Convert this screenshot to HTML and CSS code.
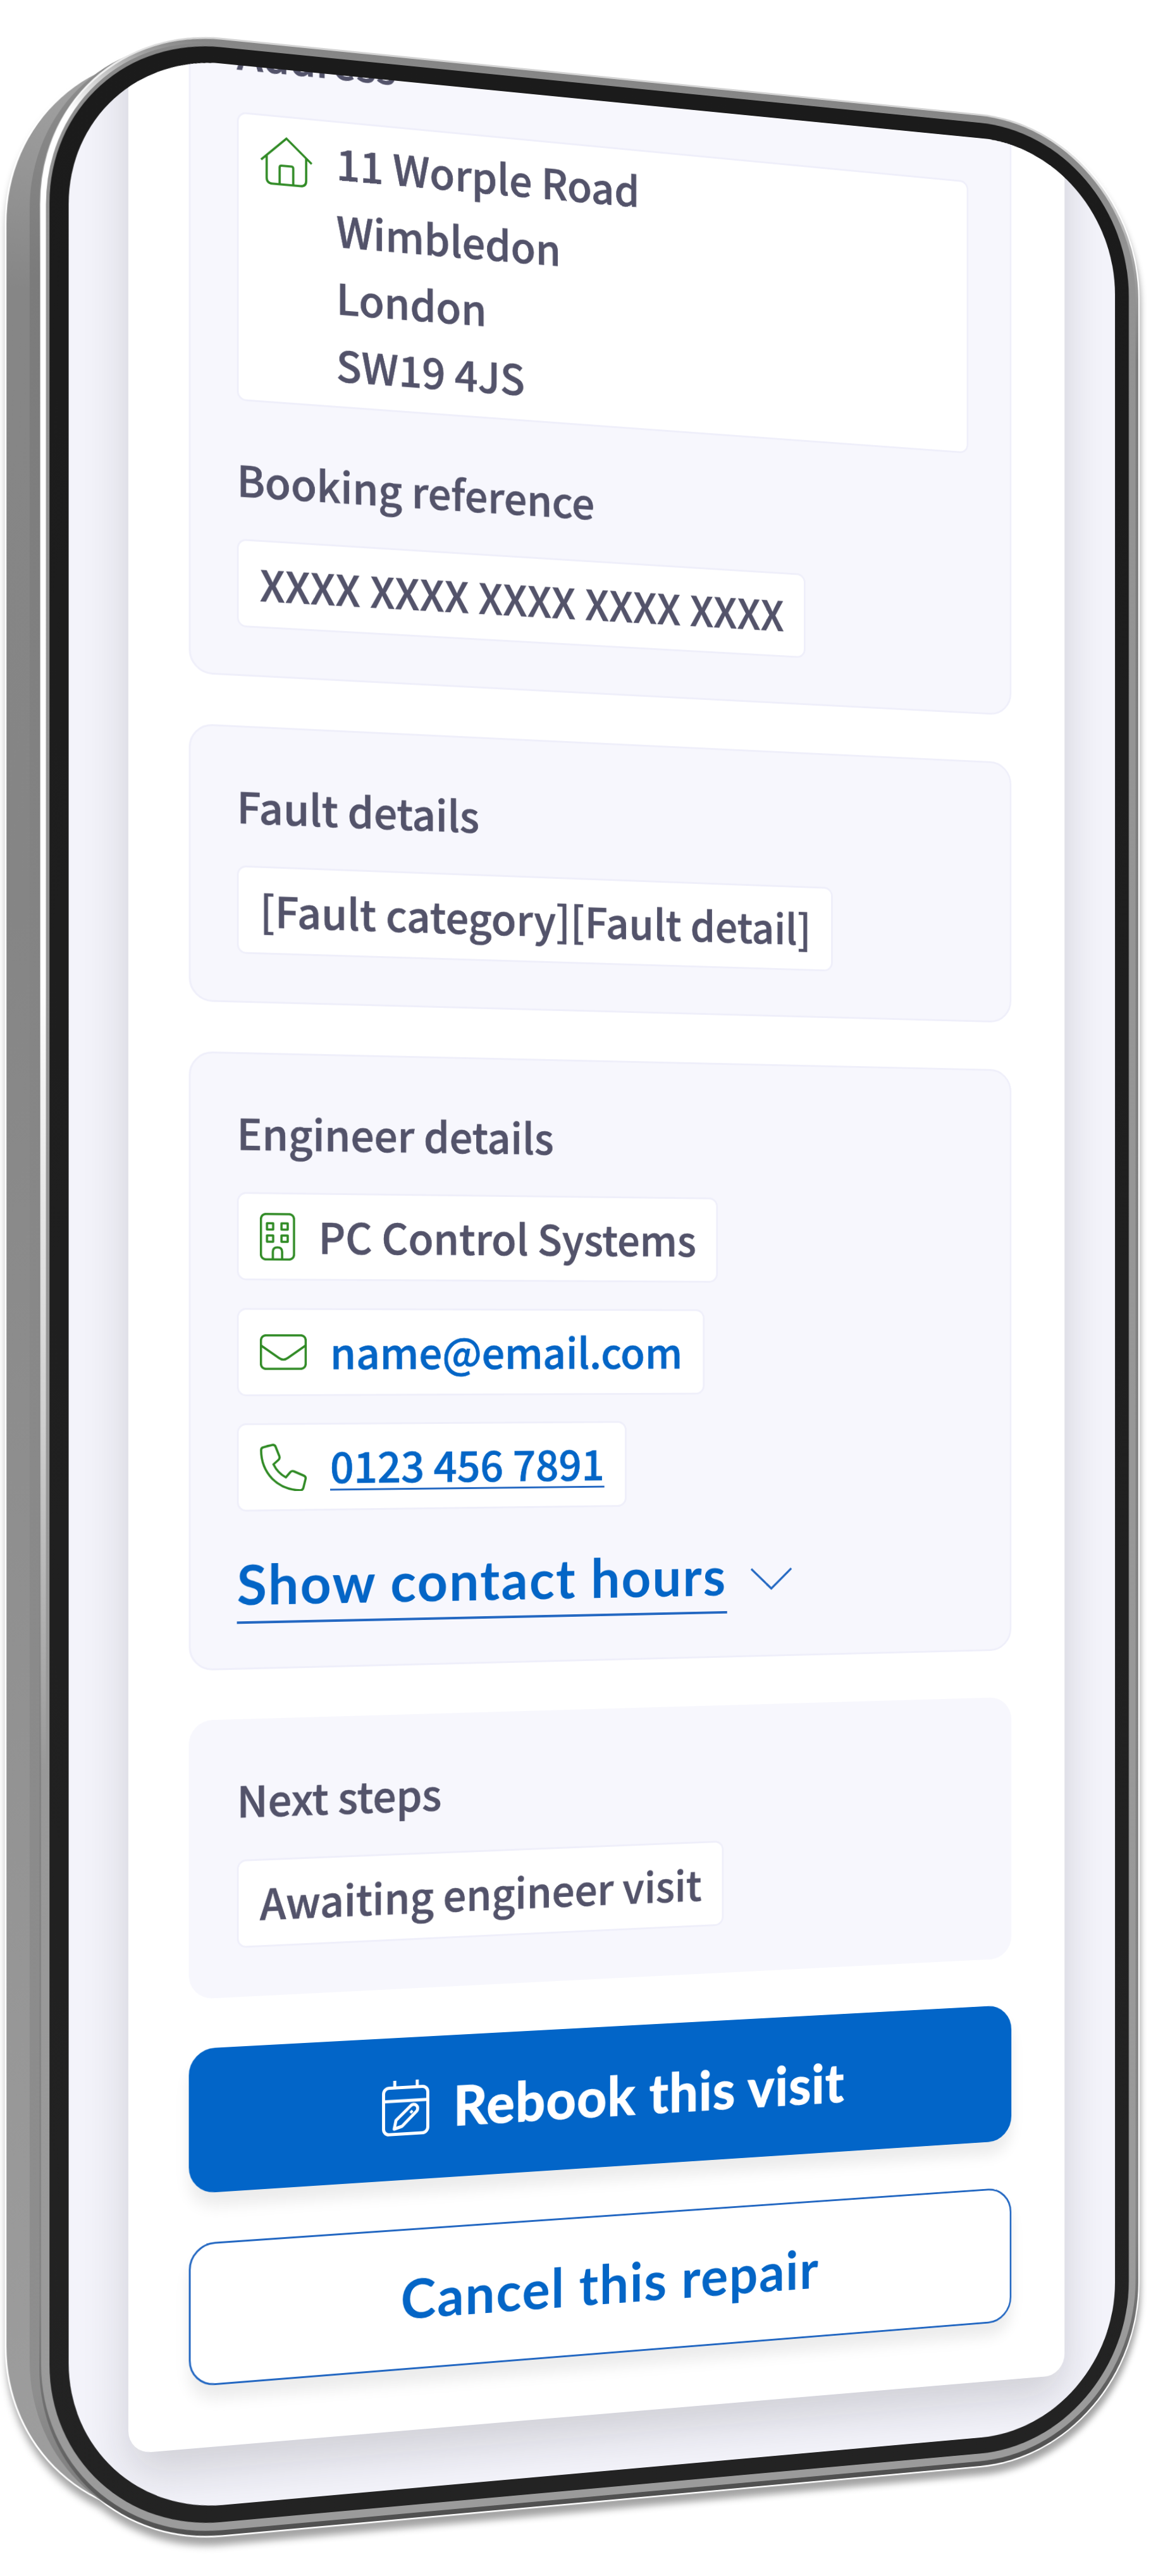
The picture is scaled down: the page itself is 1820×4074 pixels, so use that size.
FILE: index.html
```html
<!DOCTYPE html>
<html lang="en">
<head>
<meta charset="utf-8">
<title>Repair visit</title>
<link rel="stylesheet" href="styles.css">
</head>
<body>
<div class="stage">
<div class="phone">
  <svg class="frame" viewBox="0 0 2000 4074" aria-hidden="true">
    <defs>
      <linearGradient id="side" x1="0" y1="0" x2="0" y2="1">
        <stop offset="0" stop-color="#a6a6a6"/><stop offset=".04" stop-color="#999"/><stop offset=".1" stop-color="#868686"/>
        <stop offset=".35" stop-color="#858585"/><stop offset=".8" stop-color="#979797"/><stop offset="1" stop-color="#9e9e9e"/>
      </linearGradient>
      <linearGradient id="groove" x1="0" y1="0" x2="0" y2="1">
        <stop offset="0" stop-color="#8f8f8f"/><stop offset=".1" stop-color="#7b7b7b"/><stop offset=".5" stop-color="#888"/><stop offset=".94" stop-color="#8e8e8e"/><stop offset="1" stop-color="#777"/>
      </linearGradient>
      <linearGradient id="rim" x1="0" y1="0" x2="0" y2="1">
        <stop offset="0" stop-color="#d4d4d4"/><stop offset=".02" stop-color="#e4e4e4"/><stop offset=".06" stop-color="#a0a0a0"/><stop offset=".1" stop-color="#7c7c7c"/>
        <stop offset=".9" stop-color="#868686"/><stop offset="1" stop-color="#505050"/>
      </linearGradient>
      <linearGradient id="metal" x1="0" y1="0" x2="0" y2="1">
        <stop offset="0" stop-color="#868686"/><stop offset=".05" stop-color="#929292"/><stop offset="1" stop-color="#9b9b9b"/>
      </linearGradient>
      <linearGradient id="bezel" x1="0" y1="0" x2="0" y2="1">
        <stop offset="0" stop-color="#1b1b1b"/><stop offset="1" stop-color="#232323"/>
      </linearGradient>
      <linearGradient id="shine" gradientUnits="userSpaceOnUse" x1="0" y1="45" x2="0" y2="2800">
        <stop offset=".003" stop-color="#fff" stop-opacity="0"/><stop offset=".05" stop-color="#fff"/><stop offset=".55" stop-color="#fff"/><stop offset=".8" stop-color="#fff" stop-opacity=".55"/><stop offset="1" stop-color="#fff" stop-opacity="0"/>
      </linearGradient>
    </defs>
    <g class="body-shadow">
      <rect x="12" y="80" width="1700" height="3906" rx="290" fill="url(#side)" stroke="#fff" stroke-width="5"/>
      <rect x="63" y="45" width="1870" height="3978" rx="290" fill="#888" stroke="#fff" stroke-width="5"/>
    </g>
    <rect x="12" y="80" width="1700" height="3906" rx="290" fill="url(#side)"/>
    <rect x="48" y="54" width="1800" height="3958" rx="290" fill="url(#groove)"/>
    <rect x="63" y="45" width="1870" height="3978" rx="290" fill="url(#rim)"/>
    <rect x="66" y="48" width="1862" height="3967" rx="286" fill="url(#metal)"/>
    <path d="M345 51A276 284 0 0 0 69 335V2800" fill="none" stroke="url(#shine)" stroke-width="9"/>
    <rect x="79" y="60" width="1836.500" height="3942" rx="272" fill="url(#bezel)"/>
  </svg>

  <main class="screen">
    <div class="sheet">
      <section class="card">
        <h2>Address</h2>
        <div class="chip chip-wide">
          <svg class="icon house" viewBox="0 0 86 78"><path d="M2 39 43 2l41 37M11 31v36q0 9 9 9h46q9 0 9-9V31M32 76V49q0-3 3-3h16q3 0 3 3v27"/></svg>
          <address>11 Worple Road<br>Wimbledon<br>London<br>SW19 4JS</address>
        </div>
        <h2 class="second">Booking reference</h2>
        <div class="chip"><span class="ref">XXXX XXXX XXXX XXXX XXXX</span></div>
      </section>

      <section class="card">
        <h2>Fault details</h2>
        <div class="chip"><span class="fault">[Fault category][Fault detail]</span></div>
      </section>

      <section class="card engineer">
        <h2>Engineer details</h2>
        <div class="chips">
          <div class="chip">
            <svg class="icon building" viewBox="0 0 57 76"><rect x="1.700" y="1.700" width="53.600" height="72.600" rx="8"/><path d="M11.500 16.500h10v10h-10zM35 16.500h10v10H35zM11.500 36h10v10h-10zM35 36h10v10H35zM21 74V62q0-7 7.500-7t7.500 7v12"/></svg>
            <span>PC Control Systems</span>
          </div>
          <div class="chip">
            <svg class="icon mail" viewBox="0 0 76 57"><rect x="1.700" y="1.700" width="72.600" height="53.600" rx="8"/><path d="M2 18l29 20q7 5 14 0l29-20"/></svg>
            <a class="email">name@email.com</a>
          </div>
          <div class="chip">
            <svg class="icon phone-icon" viewBox="0 0 76 76"><path d="M6 5.500 20 2q4-1 5.500 3l6 15q1.200 3.500-1.500 6l-8 7q7 14 20 21l7-8q2.500-3 6-1.500l16 7q4 1.800 3 5.500l-3.500 14q-1 4-5 4Q38 74 20 56 2 37 2 10q0-3.700 4-4.500Z"/></svg>
            <a class="tel">0123 456 7891</a>
          </div>
        </div>
        <a class="toggle"><span>Show contact hours</span>
          <svg class="chevron" viewBox="0 0 74 38"><path d="M2 2l35 33L72 2"/></svg>
        </a>
      </section>

      <section class="card plain">
        <h2>Next steps</h2>
        <div class="chip"><span>Awaiting engineer visit</span></div>
      </section>

      <button class="btn primary">
        <svg class="calendar" viewBox="0 0 78 90"><rect x="2.500" y="12.500" width="73" height="75" rx="9"/><path d="M3 34h72M21 1v14M58 1v14M20 79l3-14 24-22a6.500 6.500 0 0 1 10 9L33 75ZM47 51l3 3"/></svg>
        <span>Rebook this visit</span>
      </button>
      <button class="btn secondary"><span>Cancel this repair</span></button>
    </div>
  </main>
</div>
</div>
</body>
</html>
```
FILE: styles.css
```css
* { box-sizing: border-box; }

body {
  margin: 0;
  background: #fff;
  color: #53536a;
  font-family: "Noto Sans CJK SC", "Noto Sans", sans-serif;
  font-weight: 500;
  font-size: 68px;
  line-height: 108px;
  -webkit-text-stroke: .7px currentColor;
}

.stage {
  width: 1820px;
  height: 4074px;
  overflow: hidden;
}

/* Both layers share one grid cell, tilted together in perspective */
.phone {
  display: grid;
  width: 2000px;
  height: 4074px;
  transform-origin: 0 0;
  transform: matrix3d(1.0097846, .1025696, 0, .0000482, 0, 1, 0, 0, 0, 0, 1, 0, -1.98627, -20.82163, 0, .9902154);
}

.frame, .screen { grid-area: 1 / 1; }
.frame { width: 2000px; height: 4074px; overflow: visible; }
.body-shadow { filter: drop-shadow(2px 13px 6px rgba(0, 0, 0, .36)); }

.screen {
  display: flex;
  flex-direction: column;
  justify-content: flex-end;
  width: 1781px;
  height: 3889.500px;
  margin: 85.500px 0 0 109px;
  padding: 0 93px 94px 94px;
  border-radius: 245px;
  overflow: hidden;
  background: #f3f3fa;
}

.sheet {
  display: flex;
  flex-direction: column;
  gap: 79px;
  flex: none;
  padding: 0 97px 98px 96px;
  border-radius: 0 0 36px 36px;
  background: #fff;
  box-shadow: 0 34px 72px rgba(25, 25, 32, .16);
}

.card {
  padding: 76px 75px 75px 74px;
  border: 3px solid #efeffa;
  border-radius: 38px;
  background: #f7f7fd;
}
.card.engineer { padding-bottom: 70px; }
.card.plain { padding: 80px 78px 78px 77px; border: 0; }

h2 {
  margin: 0 0 49px;
  font: inherit;
  line-height: 95px;
}
h2.second { margin-top: 76px; }

.chips {
  display: flex;
  flex-direction: column;
  align-items: flex-start;
  gap: 43.500px;
}

.chip {
  display: flex;
  align-items: center;
  gap: 38px;
  width: fit-content;
  height: 141px;
  padding: 0 35px 0 34px;
  border: 3px solid #efeffa;
  border-radius: 15px;
  background: #fff;
}
.chip > span, .chip > a { margin-bottom: 3px; }
.chip-wide {
  width: auto;
  height: 461px;
  align-items: flex-start;
  padding-top: 9px;
}
address { font-style: normal; }
.ref { letter-spacing: .4px; }
.fault { letter-spacing: .2px; }

.icon { fill: none; stroke: #2f8a24; stroke-width: 3.600; stroke-linejoin: round; flex: none; }
.house { width: 86px; height: 78px; margin-top: 22px; }
.building { width: 57px; height: 76px; }
.mail { width: 76px; height: 57px; }
.phone-icon { width: 76px; height: 76px; }

a { color: #0465c6; }
.tel { line-height: 76px; border-bottom: 3px solid #2468c2; }

.toggle {
  display: flex;
  align-items: flex-start;
  gap: 40px;
  margin-top: 66px;
  font-family: Lato, sans-serif;
  font-weight: 700;
  font-size: 88px;
  letter-spacing: 2.500px;
  line-height: 98px;
  -webkit-text-stroke: 0;
}
.toggle span { padding-bottom: 11px; border-bottom: 4px solid #2468c2; }
.chevron { width: 74px; height: 38px; margin-top: 38px; fill: none; stroke: #2468c2; stroke-width: 3.500; }

.btn {
  display: flex;
  align-items: center;
  justify-content: center;
  gap: 40px;
  border: 3px solid #2468c2;
  border-radius: 42px;
  font-family: Lato, sans-serif;
  font-weight: 700;
  font-size: 88px;
  -webkit-text-stroke: 0;
  box-shadow: 0 22px 24px rgba(0, 0, 0, .08);
}
.primary { height: 230px; padding: 0 6px 4px 20px; background: #0265c8; border-color: #0265c8; color: #fff; letter-spacing: 1.500px; -webkit-text-stroke: 1.500px currentColor; }
.secondary { height: 228px; padding-bottom: 5px; background: #fff; color: #0465c6; letter-spacing: 2px; }
.calendar { width: 78px; height: 90px; fill: none; stroke: #fff; stroke-width: 5; stroke-linejoin: round; }
```
